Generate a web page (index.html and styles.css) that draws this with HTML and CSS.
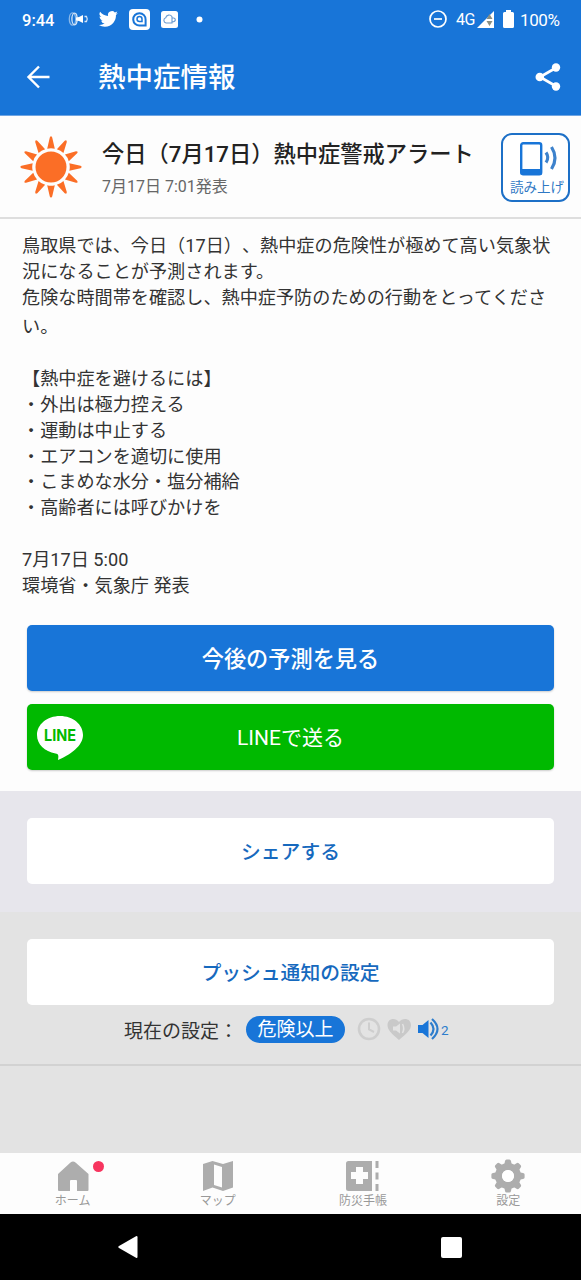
FILE: index.html
```html
<!DOCTYPE html>
<html lang="ja">
<head>
<meta charset="utf-8">
<title>熱中症情報</title>
<link rel="stylesheet" href="styles.css">
</head>
<body>
<div class="screen">
  <header class="top">
    <div class="status">
      <span class="clock">9:44</span>
      <svg class="notices" width="140" height="24" viewBox="0 0 140 24">
        <g fill="none" stroke="#d5e4f5" stroke-width="1.3">
          <ellipse cx="4.500" cy="12" rx="3.2" ry="6.2" opacity=".6"/>
          <ellipse cx="6.500" cy="12" rx="2.6" ry="5.8"/>
          <path d="M16.500 9.500h2q1.500 2.500 0 5h-2"/>
        </g>
        <path fill="#fff" d="M8 10.500l3-.5 4-2v8l-4-2-3-.5z"/>
        <path fill="#fff" transform="translate(31 2.3) scale(.8)" d="M23.6 4.6a9.7 9.7 0 0 1-2.8.8 4.900 4.900 0 0 0 2.100-2.700 9.800 9.800 0 0 1-3.100 1.200 4.900 4.900 0 0 0-8.400 4.500A13.900 13.900 0 0 1 1.400 3.200a4.900 4.900 0 0 0 1.500 6.500 4.900 4.900 0 0 1-2.200-.6c0 2.300 1.600 4.400 3.900 4.900a5 5 0 0 1-2.200.1 4.900 4.900 0 0 0 4.600 3.400A9.900 9.900 0 0 1-.2 19.500a14 14 0 0 0 7.500 2.200c9.100 0 14.300-7.700 13.900-14.600a10 10 0 0 0 2.400-2.500z"/>
        <rect x="61" y="2" width="21" height="21" rx="4" fill="#fff"/>
        <path d="M77.600 18.500H72a6.200 6.200 0 1 1 5.600-5.800z" fill="none" stroke="#1875d8" stroke-width="2"/>
        <path d="M74 14.500h-2.500a2.500 2.500 0 1 1 2.500-2.500z" fill="none" stroke="#1875d8" stroke-width="1.500"/>
        <rect x="93" y="4" width="17" height="17" rx="2.500" fill="#fff"/>
        <path d="M98 16a2.700 2.700 0 0 1-.3-5.200 3.400 3.400 0 0 1 6.300-1v6.200zM104 11h1.800a1.800 1.800 0 0 1 1.500 1.800q0 2.200-3.300 2.200" fill="none" stroke="#6a9bd1" stroke-width="1.100"/>
        <circle cx="131.500" cy="12.500" r="3" fill="#fff"/>
      </svg>
      <svg class="dnd" width="20" height="20" viewBox="0 0 20 20"><circle cx="10" cy="10" r="8" fill="none" stroke="#fff" stroke-width="1.700"/><path d="M6 10h8" stroke="#fff" stroke-width="1.700"/></svg>
      <span class="network">4G</span>
      <svg class="signal" width="18" height="18" viewBox="0 0 18 18"><path d="M0 17L17 0v17z" fill="#fff"/><path d="M9.500 10h6l-3 5zM9.500 8h6l-3-5z" fill="#8a8f83"/></svg>
      <svg class="battery" width="11" height="18" viewBox="0 0 11 18"><path d="M3 0h5v2h1.500Q11 2 11 3.500v13q0 1.500-1.500 1.500h-8Q0 18 0 16.500v-13Q0 2 1.500 2H3z" fill="#fff"/></svg>
      <span class="percent">100%</span>
    </div>
    <div class="appbar">
      <svg class="back" width="24" height="24" viewBox="0 0 24 24"><path d="M13 1.500L2.500 12 13 22.500M2.500 12h21" fill="none" stroke="#fff" stroke-width="2.400"/></svg>
      <h1 class="title">熱中症情報</h1>
      <svg class="share" width="26" height="28" viewBox="0 0 26 28"><path d="M21.500 4.500L5 14l16.500 9.500" fill="none" stroke="#fff" stroke-width="2.700"/><g fill="#fff"><circle cx="21" cy="4.500" r="4.200"/><circle cx="4.800" cy="14" r="4.300"/><circle cx="21" cy="23.500" r="4.200"/></g></svg>
    </div>
  </header>

  <section class="alert">
    <svg class="sun" width="62" height="62" viewBox="-31 -31 62 62">
      <defs><path id="ray" d="M-3.800-18.300L-1.200-29.500Q0-31.800 1.200-29.500L3.800-18.300Q0-19.300-3.800-18.300z"/></defs>
      <g fill="#fb6e26">
        <circle r="15.500"/>
        <use href="#ray"/><use href="#ray" transform="rotate(30)"/><use href="#ray" transform="rotate(60)"/><use href="#ray" transform="rotate(90)"/>
        <use href="#ray" transform="rotate(120)"/><use href="#ray" transform="rotate(150)"/><use href="#ray" transform="rotate(180)"/><use href="#ray" transform="rotate(210)"/>
        <use href="#ray" transform="rotate(240)"/><use href="#ray" transform="rotate(270)"/><use href="#ray" transform="rotate(300)"/><use href="#ray" transform="rotate(330)"/>
      </g>
    </svg>
    <div class="alert-text">
      <h2 class="alert-title">今日（7月17日）熱中症警戒アラート</h2>
      <p class="alert-time">7月17日 7:01発表</p>
    </div>
    <button class="read">
      <svg width="42" height="34" viewBox="0 0 42 34"><rect x="2.200" y="1.200" width="20" height="31" rx="2" fill="none" stroke="#1875d8" stroke-width="2.400"/><path d="M1.500 27h21.500v5.500h-21.500z" fill="#1875d8"/><path d="M27 10.500q3.500 5 0 10M32.500 5q7 11 0 22" fill="none" stroke="#3d82cc" stroke-width="3.200"/></svg>
      <span>読み上げ</span>
    </button>
  </section>

  <main class="detail">
    <div class="message">
      <p>鳥取県では、今日（17日）、熱中症の危険性が極めて高い気象状況になることが予測されます。</p>
      <p>危険な時間帯を確認し、熱中症予防のための行動をとってくださ</p>
      <p class="caution">い。</p>
      <p class="tips-head">【熱中症を避けるには】</p>
      <ul class="tips">
        <li>・外出は極力控える</li>
        <li>・運動は中止する</li>
        <li>・エアコンを適切に使用</li>
        <li>・こまめな水分・塩分補給</li>
        <li>・高齢者には呼びかけを</li>
      </ul>
      <p>7月17日 5:00</p>
      <p>環境省・気象庁 発表</p>
    </div>
    <button class="btn forecast">今後の予測を見る</button>
    <button class="btn line">
      <svg class="line-logo" width="48" height="46" viewBox="0 0 48 46"><path d="M24 1C11 1 1 9.500 1 20c0 9.500 7.500 16.500 18.500 18.500 3 .7 3.300 1.500 2.500 6.500C34 40 47 31 47 20 47 9.500 37 1 24 1z" fill="#fff"/><text x="24" y="25.700" text-anchor="middle" textLength="32" lengthAdjust="spacingAndGlyphs">LINE</text></svg>
      LINEで送る
    </button>
  </main>

  <section class="share-block"><button class="btn plain">シェアする</button></section>

  <section class="push">
    <button class="btn plain">プッシュ通知の設定</button>
    <div class="current">
      <span>現在の設定：</span>
      <span class="level">危険以上</span>
      <svg class="modes" width="94" height="26" viewBox="0 0 94 26">
        <g fill="none" stroke="#cecece" stroke-width="2.600"><circle cx="12" cy="13" r="10"/><path d="M12 6.500v7l5 2.500" stroke-width="2"/></g>
        <path d="M42 24C34 17 30.500 14 30.500 9c0-7 8-8 11.500-3C45.500 1 54 2 54 9c0 5-4 8-12 15z" fill="#c9c9c9"/>
        <path d="M36 10.500h3l4-3v10l-4-3h-3z" fill="#e3e3e3"/><path d="M45.500 8q2.500 4.500 0 9" fill="none" stroke="#e3e3e3" stroke-width="1.500"/>
        <path d="M61 9h4.500l6-5v18l-6-5H61z" fill="#1875d8"/><path d="M73.500 6.500q6 6.500 0 13M75 3q11 10 0 20" fill="none" stroke="#2d7dcc" stroke-width="2.200"/>
        <text x="84" y="18.500">2</text>
      </svg>
    </div>
  </section>
  <div class="rest"></div>

  <nav class="tabs">
    <a class="tab"><svg width="60" height="34" viewBox="0 0 60 34"><path d="M15 15L27.500 3.500q2.500-2 5 0L45.500 15v16q0 1-1 1H34V22q0-1-1-1h-5q-1 0-1 1v10H16q-1 0-1-1z" fill="#adadad"/><circle cx="55.500" cy="7.500" r="5.500" fill="#f7355f"/></svg>ホーム</a>
    <a class="tab"><svg width="32" height="34" viewBox="0 0 32 34"><path d="M1 5L10.500 2l10.500 3L31 2v26.500l-10 3.500-10.500-3.500L1 32zM12 5.500V26l8 2.500V8z" fill="#adadad" fill-rule="evenodd"/></svg>マップ</a>
    <a class="tab"><svg width="36" height="34" viewBox="0 0 36 34"><path d="M3.500 2H27v30H3.500Q1 32 1 29.500v-25Q1 2 3.500 2zM11 8v5H6v7h5v5h7v-5h5v-7h-5V8z" fill="#adadad" fill-rule="evenodd"/><path d="M32 2v7M32 13.500v7M32 25v7" stroke="#adadad" stroke-width="3"/></svg>防災手帳</a>
    <a class="tab"><svg width="36" height="34" viewBox="-18 -17 36 34"><defs><path id="tooth" d="M-4-10l1-5q.3-1.600 1.600-1.600h2.800q1.300 0 1.600 1.600l1 5z"/></defs><g fill="#adadad"><use href="#tooth"/><use href="#tooth" transform="rotate(45)"/><use href="#tooth" transform="rotate(90)"/><use href="#tooth" transform="rotate(135)"/><use href="#tooth" transform="rotate(180)"/><use href="#tooth" transform="rotate(225)"/><use href="#tooth" transform="rotate(270)"/><use href="#tooth" transform="rotate(315)"/></g><circle r="9.500" fill="none" stroke="#adadad" stroke-width="7"/><circle r="6" fill="#fff"/></svg>設定</a>
  </nav>
  <footer class="system">
    <svg width="20" height="24" viewBox="0 0 20 24"><path d="M1 11L18 1.300q1.500-.8 1.500 1v19.400q0 1.800-1.500 1L1 13q-1.500-1 0-2z" fill="#fff"/></svg>
    <span class="recent"></span>
  </footer>
</div>
</body>
</html>
```
FILE: styles.css
```css
* { box-sizing: border-box; }
body, h1, h2, p, ul { margin: 0; padding: 0; }
body { font-family: Roboto, "Noto Sans CJK JP", sans-serif; color: #333; background: #000; text-spacing-trim: space-all; }
svg { display: block; flex: none; }
button { font: inherit; border: 0; margin: 0; padding: 0; }
.screen { width: 581px; height: 1280px; display: flex; flex-direction: column; overflow: hidden; }
.screen > * { flex: none; }

.top { height: 116px; background: #1875d8; border-bottom: 1px solid #6fa5e3; color: #fff; }
.status { height: 40px; display: flex; align-items: center; padding-left: 22px; font-size: 17px; line-height: 20px; }
.clock { width: 46px; font-weight: 500; font-size: 16.500px; padding-top: 1px; }
.notices { margin-top: -2px; }
.dnd { margin-left: 220px; margin-top: -2px; }
.network { margin-left: 8px; width: 19px; font-size: 16px; letter-spacing: -.5px; white-space: nowrap; }
.signal { margin-left: 2px; margin-top: -1px; }
.battery { margin-left: 8px; margin-top: -2px; }
.percent { margin-left: 6px; letter-spacing: -.4px; }
.appbar { height: 75px; display: flex; align-items: center; padding: 0 20px 0 26px; }
.back, .share { margin-top: -2px; }
.title { margin-left: 48px; flex: 1; font-size: 27.500px; font-weight: 500; line-height: 40px; }

.alert { height: 103px; display: flex; background: #fdfdfd; border-bottom: 2px solid #dedede; padding: 17px 11px 0 20px; }
.sun { margin-top: 3px; }
.alert-text { flex: 1; margin-left: 20px; white-space: nowrap; }
.alert-title { margin-top: 4px; font-size: 22.250px; font-weight: 500; line-height: 34px; color: #222; }
.alert-time { margin-top: 4px; font-size: 16px; line-height: 24px; color: #666; }
.read { width: 69px; height: 69px; display: flex; flex-direction: column; align-items: center; background: #fff; border: 2px solid #1d70c7; border-radius: 11px; padding-top: 7px; color: #2f78c4; font-size: 13.500px; }
.read svg { margin-left: 8px; }
.read span { line-height: 20px; margin-top: 1px; margin-left: 3px; white-space: nowrap; }

.detail { height: 572px; background: #fdfdfd; padding: 14px 27px 0; }
.message { height: 391.500px; margin: 0 -5px; font-size: 18.150px; line-height: 25.900px; width: 534px; line-break: anywhere; }
.caution { padding-top: 3px; margin-bottom: 26.200px; }
.tips { list-style: none; margin-bottom: 26px; }
.btn { display: flex; align-items: center; justify-content: center; width: 527px; height: 66px; border-radius: 5px; padding-bottom: 2px; }
.forecast { background: #1875d8; color: #fff; font-size: 22.200px; font-weight: 500; box-shadow: 0 1px 2px #ccc; }
.line { position: relative; margin-top: 13.500px; background: #00b900; color: #fff; font-size: 21px; box-shadow: 0 1px 2px #ccc; }
.line-logo { position: absolute; left: 9px; top: 11px; font: bold 16px Inter, sans-serif; fill: #00b900; }

.share-block { height: 121px; background: #e7e6ec; padding: 27px 27px 0; }
.plain { background: #fff; color: #1669be; font-size: 19.800px; font-weight: 500; }
.push { height: 154px; background: #e3e3e3; border-bottom: 2px solid #d2d2d2; padding: 27px 27px 0; }
.current { display: flex; align-items: center; height: 28px; margin-top: 10px; margin-left: 97px; font-size: 19px; white-space: nowrap; }
.level { margin-left: 8px; height: 27px; width: 99px; line-height: 28px; border-radius: 14px; background: #1875d8; color: #fff; text-align: center; }
.modes { margin-left: 12px; font-size: 13.500px; fill: #2d7dcc; }
.rest { height: 87px; background: #e3e3e3; }

.tabs { height: 61px; display: grid; grid-template-columns: repeat(4, 1fr); background: #fdfdfd; }
.tab { display: flex; flex-direction: column; align-items: center; padding-top: 6px; font-size: 12px; line-height: 16px; color: #999; }
.tab svg { overflow: visible; }
.system { height: 66px; display: flex; align-items: center; background: #000; padding-left: 118px; }
.recent { width: 21px; height: 21px; margin-left: 303px; border-radius: 2px; background: #fff; }
```
